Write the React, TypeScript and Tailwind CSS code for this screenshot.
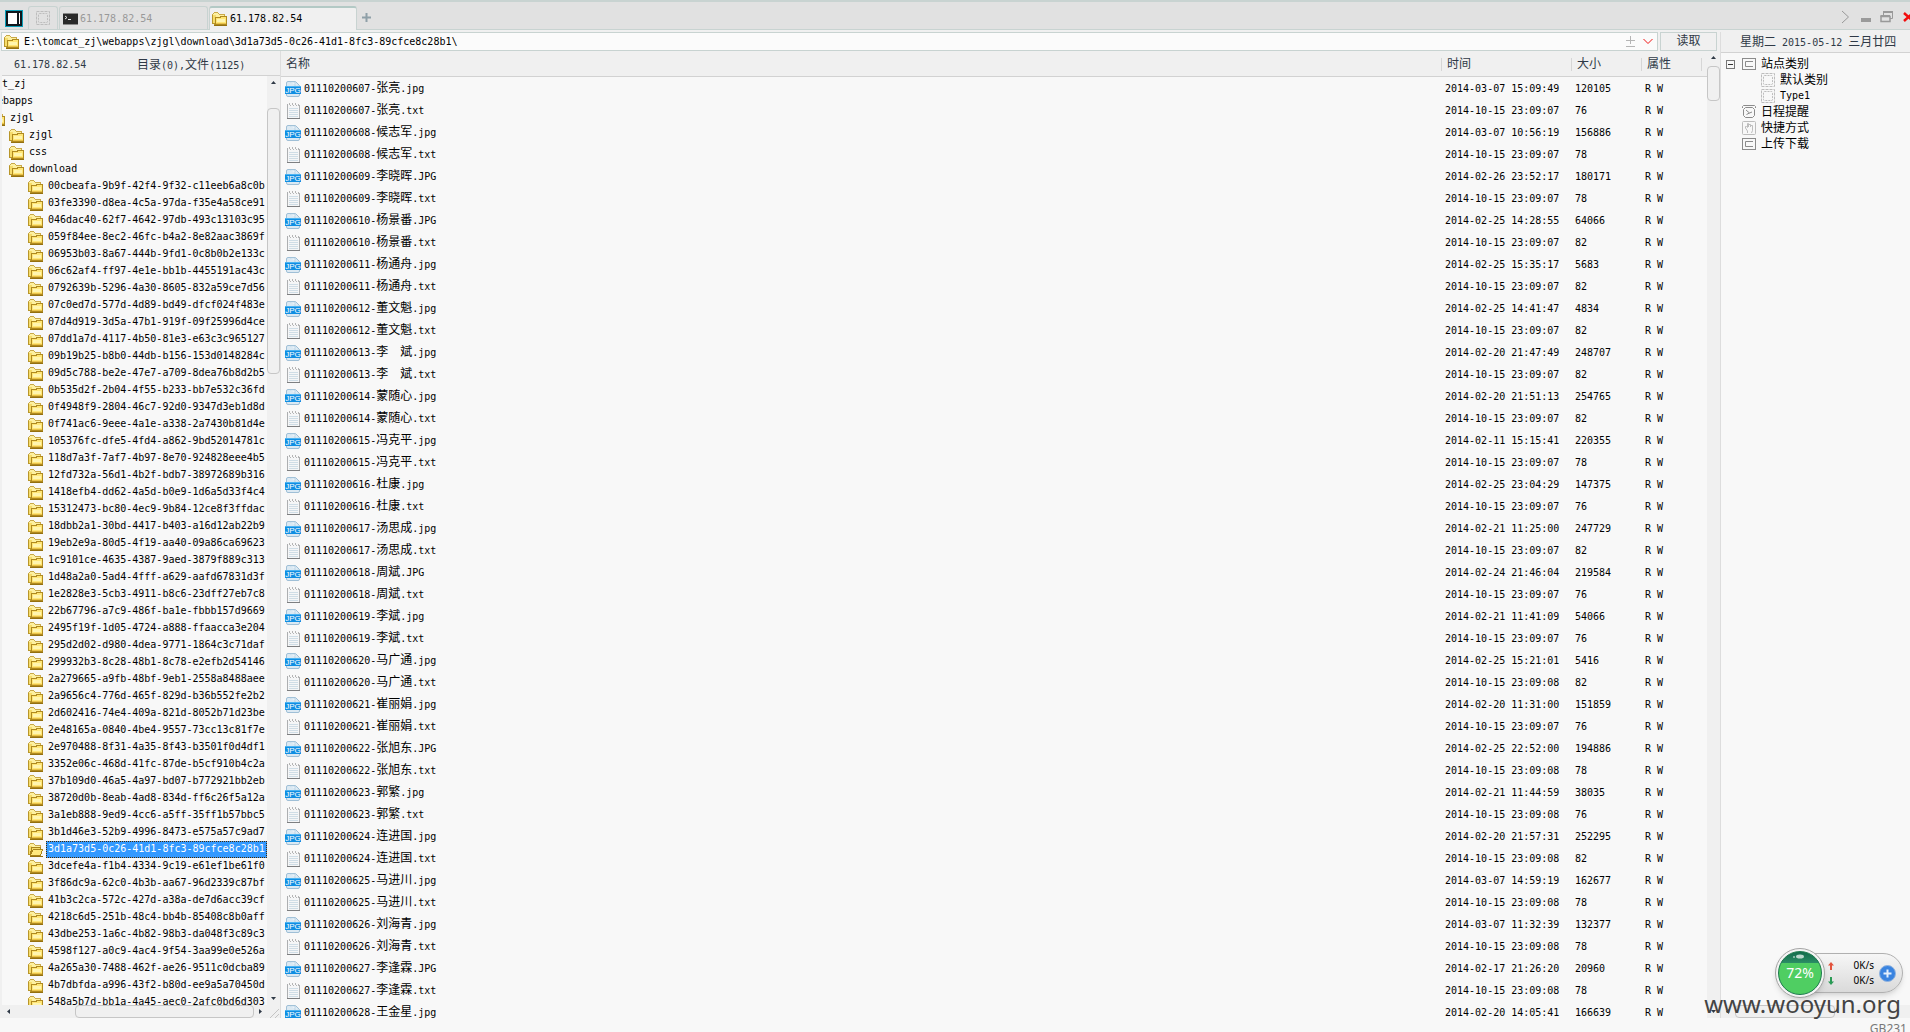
import type { ReactNode } from 'react';

interface TreeNode {
  name: string;
  depth: number;
  expandable?: boolean;
  selected?: boolean;
}

const folders = [
  '00cbeafa-9b9f-42f4-9f32-c11eeb6a8c0b',
  '03fe3390-d8ea-4c5a-97da-f35e4a58ce91',
  '046dac40-62f7-4642-97db-493c13103c95',
  '059f84ee-8ec2-46fc-b4a2-8e82aac3869f',
  '06953b03-8a67-444b-9fd1-0c8b0b2e133c',
  '06c62af4-ff97-4e1e-bb1b-4455191ac43c',
  '0792639b-5296-4a30-8605-832a59ce7d56',
  '07c0ed7d-577d-4d89-bd49-dfcf024f483e',
  '07d4d919-3d5a-47b1-919f-09f25996d4ce',
  '07dd1a7d-4117-4b50-81e3-e63c3c965127',
  '09b19b25-b8b0-44db-b156-153d0148284c',
  '09d5c788-be2e-47e7-a709-8dea76b8d2b5',
  '0b535d2f-2b04-4f55-b233-bb7e532c36fd',
  '0f4948f9-2804-46c7-92d0-9347d3eb1d8d',
  '0f741ac6-9eee-4a1e-a338-2a7430b81d4e',
  '105376fc-dfe5-4fd4-a862-9bd52014781c',
  '118d7a3f-7af7-4b97-8e70-924828eee4b5',
  '12fd732a-56d1-4b2f-bdb7-38972689b316',
  '1418efb4-dd62-4a5d-b0e9-1d6a5d33f4c4',
  '15312473-bc80-4ec9-9b84-12ce8f3ffdac',
  '18dbb2a1-30bd-4417-b403-a16d12ab22b9',
  '19eb2e9a-80d5-4f19-aa40-09a86ca69623',
  '1c9101ce-4635-4387-9aed-3879f889c313',
  '1d48a2a0-5ad4-4fff-a629-aafd67831d3f',
  '1e2828e3-5cb3-4911-b8c6-23dff27eb7c8',
  '22b67796-a7c9-486f-ba1e-fbbb157d9669',
  '2495f19f-1d05-4724-a888-ffaacca3e204',
  '295d2d02-d980-4dea-9771-1864c3c71daf',
  '299932b3-8c28-48b1-8c78-e2efb2d54146',
  '2a279665-a9fb-48bf-9eb1-2558a8488aee',
  '2a9656c4-776d-465f-829d-b36b552fe2b2',
  '2d602416-74e4-409a-821d-8052b71d23be',
  '2e48165a-0840-4be4-9557-73cc13c81f7e',
  '2e970488-8f31-4a35-8f43-b3501f0d4df1',
  '3352e06c-468d-41fc-87de-b5cf910b4c2a',
  '37b109d0-46a5-4a97-bd07-b772921bb2eb',
  '38720d0b-8eab-4ad8-834d-ff6c26f5a12a',
  '3a1eb888-9ed9-4cc6-a5ff-35ff1b57bbc5',
  '3b1d46e3-52b9-4996-8473-e575a57c9ad7',
  '3d1a73d5-0c26-41d1-8fc3-89cfce8c28b1',
  '3dcefe4a-f1b4-4334-9c19-e61ef1be61f0',
  '3f86dc9a-62c0-4b3b-aa67-96d2339c87bf',
  '41b3c2ca-572c-427d-a38a-de7d6acc39cf',
  '4218c6d5-251b-48c4-bb4b-85408c8b0aff',
  '43dbe253-1a6c-4b82-98b3-da048f3c89c3',
  '4598f127-a0c9-4ac4-9f54-3aa99e0e526a',
  '4a265a30-7488-462f-ae26-9511c0dcba89',
  '4b7dbfda-a996-43f2-b80d-ee9a5a70450d',
  '548a5b7d-bb1a-4a45-aec0-2afc0bd6d303',
];

const tree: TreeNode[] = [
  { name: 'tomcat_zj', depth: 0, expandable: true },
  { name: 'webapps', depth: 1, expandable: true },
  { name: 'zjgl', depth: 2, expandable: true },
  { name: 'zjgl', depth: 3 },
  { name: 'css', depth: 3 },
  { name: 'download', depth: 3, expandable: true },
  ...folders.map((name) => ({ name, depth: 4, selected: name.startsWith('3d1a73d5') })),
];

const files = [
  ['01110200607-张亮.jpg', '2014-03-07 15:09:49', '120105'],
  ['01110200607-张亮.txt', '2014-10-15 23:09:07', '76'],
  ['01110200608-候志军.jpg', '2014-03-07 10:56:19', '156886'],
  ['01110200608-候志军.txt', '2014-10-15 23:09:07', '78'],
  ['01110200609-李晓晖.JPG', '2014-02-26 23:52:17', '180171'],
  ['01110200609-李晓晖.txt', '2014-10-15 23:09:07', '78'],
  ['01110200610-杨景番.JPG', '2014-02-25 14:28:55', '64066'],
  ['01110200610-杨景番.txt', '2014-10-15 23:09:07', '82'],
  ['01110200611-杨通舟.jpg', '2014-02-25 15:35:17', '5683'],
  ['01110200611-杨通舟.txt', '2014-10-15 23:09:07', '82'],
  ['01110200612-董文魁.jpg', '2014-02-25 14:41:47', '4834'],
  ['01110200612-董文魁.txt', '2014-10-15 23:09:07', '82'],
  ['01110200613-李　斌.jpg', '2014-02-20 21:47:49', '248707'],
  ['01110200613-李　斌.txt', '2014-10-15 23:09:07', '82'],
  ['01110200614-蒙随心.jpg', '2014-02-20 21:51:13', '254765'],
  ['01110200614-蒙随心.txt', '2014-10-15 23:09:07', '82'],
  ['01110200615-冯克平.jpg', '2014-02-11 15:15:41', '220355'],
  ['01110200615-冯克平.txt', '2014-10-15 23:09:07', '78'],
  ['01110200616-杜康.jpg', '2014-02-25 23:04:29', '147375'],
  ['01110200616-杜康.txt', '2014-10-15 23:09:07', '76'],
  ['01110200617-汤思成.jpg', '2014-02-21 11:25:00', '247729'],
  ['01110200617-汤思成.txt', '2014-10-15 23:09:07', '82'],
  ['01110200618-周斌.JPG', '2014-02-24 21:46:04', '219584'],
  ['01110200618-周斌.txt', '2014-10-15 23:09:07', '76'],
  ['01110200619-李斌.jpg', '2014-02-21 11:41:09', '54066'],
  ['01110200619-李斌.txt', '2014-10-15 23:09:07', '76'],
  ['01110200620-马广通.jpg', '2014-02-25 15:21:01', '5416'],
  ['01110200620-马广通.txt', '2014-10-15 23:09:08', '82'],
  ['01110200621-崔丽娟.jpg', '2014-02-20 11:31:00', '151859'],
  ['01110200621-崔丽娟.txt', '2014-10-15 23:09:07', '76'],
  ['01110200622-张旭东.JPG', '2014-02-25 22:52:00', '194886'],
  ['01110200622-张旭东.txt', '2014-10-15 23:09:08', '78'],
  ['01110200623-郭繁.jpg', '2014-02-21 11:44:59', '38035'],
  ['01110200623-郭繁.txt', '2014-10-15 23:09:08', '76'],
  ['01110200624-连进国.jpg', '2014-02-20 21:57:31', '252295'],
  ['01110200624-连进国.txt', '2014-10-15 23:09:08', '82'],
  ['01110200625-马进川.jpg', '2014-03-07 14:59:19', '162677'],
  ['01110200625-马进川.txt', '2014-10-15 23:09:08', '78'],
  ['01110200626-刘海青.jpg', '2014-03-07 11:32:39', '132377'],
  ['01110200626-刘海青.txt', '2014-10-15 23:09:08', '78'],
  ['01110200627-李逢霖.JPG', '2014-02-17 21:26:20', '20960'],
  ['01110200627-李逢霖.txt', '2014-10-15 23:09:08', '78'],
  ['01110200628-王金星.jpg', '2014-02-20 14:05:41', '166639'],
];

// Latin is set at 10px mono (6px a character), Chinese at 12px, so both share one grid
function Mixed({ children }: { children: string }) {
  return (
    <span className="whitespace-pre">
      {children.split(/([\u3000\u4e00-\u9fff]+)/).map((part, i) =>
        i % 2 ? (
          <span key={i} className="text-[12px]">
            {part}
          </span>
        ) : (
          part
        ),
      )}
    </span>
  );
}

function FolderIcon({ open = false }: { open?: boolean }) {
  return (
    <svg width="16" height="16" viewBox="0 0 16 16" className="shrink-0" shapeRendering="crispEdges">
      <path d="M2 1h4v1h1v1h6v3H0V3h1V2h1z" fill="#c9a94a" />
      <path d="M2 2h4v1h1v1h5v2H1V3h1z" fill="#fdf0a0" />
      <path d="M0 4h4v10H2v-1H0z" fill="#b8962a" />
      <path d="M1 4h3v8H1z" fill="#f6dc6c" />
      {open ? (
        <>
          <path d="M3 5h10v9H2z" fill="#a8841c" />
          <path d="M4 6h8v3H4z" fill="#f5dc68" />
          <path d="M5 7h10v2h-1v3h-1v2H2v-2h1v-2h1V8h1z" fill="#a8841c" />
          <path d="M5 8h9v1h-1v3h-1v1H3v-1h1v-2h1z" fill="#ffe97e" />
        </>
      ) : (
        <>
          <path d="M3 6h5V5h7v9H3z" fill="#b08a20" />
          <path d="M4 7h5V6h5v7H4z" fill="#ffe676" />
          <path d="M5 8h8v3H5z" fill="#fff5b0" />
          <path d="M4 12h10v1H4z" fill="#e9c24a" />
        </>
      )}
      <path d="M2 14h13v1H2z" fill="#94700f" />
    </svg>
  );
}

function JpgIcon() {
  return (
    <svg width="16" height="16" viewBox="0 0 16 16" className="shrink-0">
      <path d="M1.5 2q0-1.500 1.500-1.500h7.500l4 4V14q0 1.500-1.500 1.500H3q-1.500 0-1.500-1.500z" fill="#dbe9f3" stroke="#9fbfd6" />
      <path d="M5 1h5v4h4" fill="#f4f9fc" stroke="#a9c9de" strokeWidth=".7" />
      <path d="M0 5h16v8H0z" fill="#108ee2" />
      <path d="M0 5h16v1H0z" fill="#4db4f2" />
      <text x="8" y="12" fontSize="8" textAnchor="middle" fill="#fff" fontFamily="Liberation Sans, sans-serif">
        JPG
      </text>
    </svg>
  );
}

function TxtIcon() {
  return (
    <svg width="16" height="16" viewBox="0 0 16 16" className="shrink-0" shapeRendering="crispEdges">
      <path d="M2 2h12v13H2z" fill="#f5f6f7" />
      <path d="M2 1h1v14H2zM14 2h1v13h-1z" fill="#adafb1" />
      <path d="M4 0h1v2H4zM7 0h1v2H7zM10 0h1v2h-1zM13 1h1v2h-1zM5 2h1v1H5zM8 2h1v1H8zM11 2h1v1h-1z" fill="#b5b5b5" />
      <path d="M4 5h9v1H4zM4 7h9v1H4zM4 9h9v1H4zM4 11h9v1H4zM4 13h9v1H4z" fill="#cfdde6" />
      <path d="M2 15h13v1H2z" fill="#7d7f81" />
    </svg>
  );
}

function DashedIcon() {
  return (
    <svg width="14" height="14" viewBox="0 0 14 14" fill="none" className="shrink-0 text-[#bdbdbd]">
      <rect x=".5" y=".5" width="13" height="13" stroke="currentColor" strokeDasharray="3 1" />
      <rect x="2.500" y="2.500" width="9" height="9" rx="1" stroke="currentColor" strokeDasharray="2 1" />
    </svg>
  );
}

function BoxIcon() {
  return (
    <svg width="14" height="14" viewBox="0 0 14 14" fill="none" stroke="#8b8b8b" className="shrink-0">
      <rect x=".5" y="1.500" width="13" height="11" />
      <path d="M11 4.500H3.500v5H11" />
    </svg>
  );
}

function ClockIcon() {
  return (
    <svg width="14" height="14" viewBox="0 0 14 14" fill="none" stroke="#8b8b8b" className="shrink-0">
      <path d="M.5 3V1.500l1-1h11l1 1V3" />
      <path d="M3.500 2.500h7l2 2v6l-2 2h-7l-2-2v-6z" />
      <path d="M4 5l3.500 3L10 7M7.500 8 4.500 9.500" />
    </svg>
  );
}

function HandIcon() {
  return (
    <svg width="14" height="14" viewBox="0 0 14 14" fill="none" stroke="#bdbdbd" className="shrink-0">
      <rect x=".5" y=".5" width="13" height="13" rx="1" />
      <path d="M5.500 12v-2l-2-3V5.500h1l1 1V2.500h1V6 3.500h2V6 4.500h2v5l-1 2.500" />
    </svg>
  );
}

type Direction = 'up' | 'down' | 'left' | 'right';

const arrows: Record<Direction, string> = {
  up: 'M0 4 2.500 1 5 4z',
  down: 'M0 1 2.500 4 5 1z',
  left: 'M4 0 1 2.500 4 5z',
  right: 'M1 0 4 2.500 1 5z',
};

function ScrollArrow({ dir }: { dir: Direction }) {
  return (
    <button aria-label={dir} className="flex h-[13px] w-[13px] shrink-0 items-center justify-center">
      <svg width="5" height="5" viewBox="0 0 5 5" fill="#2f3946">
        <path d={arrows[dir]} />
      </svg>
    </button>
  );
}

function SiteItem({ icon, child = false, children }: { icon: ReactNode; child?: boolean; children: string }) {
  return (
    <li className={`flex h-4 items-center gap-[5px] ${child ? 'pl-10' : 'pl-[21px]'}`}>
      {icon}
      <Mixed>{children}</Mixed>
    </li>
  );
}

function TabBar() {
  return (
    <header className="flex h-[30px] items-stretch border-t-2 border-b border-[#c8d3d1] bg-[#e1e1e1] pt-1 pl-[5px]">
      <svg width="18" height="17" viewBox="0 0 18 17" className="mt-1 shrink-0">
        <rect width="18" height="17" fill="#0c9fb8" />
        <rect x="1" y="1" width="16" height="15" fill="#10171c" />
        <path d="M3 3h9v11H3zM14 3h1v11h-1z" fill="#fff" />
      </svg>
      <button aria-label="首页" className="ml-[5px] flex w-[30px] items-center justify-center rounded-t-[3px] border border-b-0 border-[#c8d3d1]">
        <DashedIcon />
      </button>
      <button className="ml-px flex w-[149px] items-center gap-[2px] rounded-t-[3px] border border-b-0 border-[#c8d3d1] pt-px pl-[3px] text-[#999]">
        <svg width="15" height="12" viewBox="0 0 15 12" className="shrink-0">
          <rect width="15" height="12" fill="#8a8a8a" />
          <rect y="1" width="15" height="10" fill="#2a2a2a" />
          <path d="M2 3l2 1.500L2 6M5 6.500h3" stroke="#e6e6e6" fill="none" />
        </svg>
        61.178.82.54
      </button>
      <button className="-mb-px ml-px flex w-[148px] items-center gap-[2px] rounded-t-[3px] border border-t-2 border-b-0 border-[#c8d3d1] border-t-[#b3c9c5] bg-[#f0f0f0] pl-[2px] text-black">
        <FolderIcon />
        61.178.82.54
      </button>
      <button aria-label="新标签" className="ml-[5px]">
        <svg width="9" height="9" viewBox="0 0 9 9" stroke="#8fa0a8" strokeWidth="2">
          <path d="M4.500 0v9M0 4.500h9" />
        </svg>
      </button>
      <div className="-mr-1 ml-auto flex items-center gap-[9px] pb-px">
        <button aria-label="更多">
          <svg width="9" height="14" viewBox="0 0 9 14" fill="none" stroke="#999">
            <path d="M1 1l6.500 6L1 13" />
          </svg>
        </button>
        <button aria-label="最小化">
          <svg width="12" height="14" viewBox="0 0 12 14" fill="#9a9a9a">
            <path d="M2 8h10v4H2z" />
          </svg>
        </button>
        <button aria-label="还原">
          <svg width="14" height="14" viewBox="0 0 14 14" fill="none" stroke="#999">
            <path d="M3.500 5V1.500h9v7H10" />
            <path d="M3 2h10" strokeWidth="2" />
            <path d="M1 6.500h9v5H1z" fill="#e1e1e1" strokeWidth="1.500" />
            <path d="M.5 6h9.500" strokeWidth="2" />
          </svg>
        </button>
        <button aria-label="关闭">
          <svg width="11" height="10" viewBox="0 0 11 10" stroke="#f20d0d" strokeWidth="2.500">
            <path d="M1 1l9 8M10 1 1 9" />
          </svg>
        </button>
      </div>
    </header>
  );
}

function AddressBar() {
  return (
    <form className="flex h-[19px] shrink-0 gap-[2px] pr-[3px] pl-px">
      <label className="flex flex-1 items-center gap-1 border border-[#c8d3d1] bg-[#fbfbfb] pr-1 pl-[2px]">
        <FolderIcon />
        <input
          aria-label="路径"
          className="h-[17px] flex-1 bg-transparent leading-[17px] text-black outline-none"
          defaultValue="E:\tomcat_zj\webapps\zjgl\download\3d1a73d5-0c26-41d1-8fc3-89cfce8c28b1\"
        />
        <svg width="9" height="11" viewBox="0 0 9 11" stroke="#b5b5b5">
          <path d="M4.500 0v8M0 4.500h9M0 10.500h9" />
        </svg>
        <svg width="10" height="7" viewBox="0 0 10 7" fill="none" stroke="#f01515" className="ml-1">
          <path d="M.5 1 5 5.500 9.500 1" />
        </svg>
      </label>
      <button type="button" className="w-[57px] border border-[#c8d3d1] text-[12px] leading-[17px] text-[#2f3946]">
        读取
      </button>
    </form>
  );
}

function FolderPane() {
  return (
    <section className="flex w-[281px] shrink-0 flex-col border-r border-[#ddd] pl-[2px]">
      <div className="flex h-[25px] shrink-0 items-center border-b border-[#d2d2d2] pt-1 pl-3 text-[#2f3946]">
        <span className="w-[123px]">61.178.82.54</span>
        <Mixed>目录(0),文件(1125)</Mixed>
      </div>
      <div className="flex min-h-0 flex-1">
        <ul className="min-w-0 flex-1 overflow-hidden bg-[#f8f8f8]">
          {tree.map((node) => (
            <li
              key={`${node.depth}${node.name}`}
              className="-ml-[66px] flex h-[17px] w-max items-center"
              style={{ paddingLeft: node.depth * 19 }}
            >
              <span
                className={`mr-[7px] box-border h-[9px] w-[9px] shrink-0 ${node.expandable ? 'border border-[#555]' : ''}`}
              />
              <FolderIcon open={node.selected} />
              <span
                className={`ml-[2px] h-[17px] pr-[2px] pl-[2px] leading-4 ${
                  node.selected
                    ? 'bg-[#3399ff] text-white outline-1 -outline-offset-1 outline-dotted outline-[#4a2a00]'
                    : ''
                }`}
              >
                {node.name}
              </span>
            </li>
          ))}
        </ul>
        <div className="flex w-[13px] flex-col">
          <ScrollArrow dir="up" />
          <div className="mt-[19px] h-[266px] rounded-[4px] border border-[#c6c6c6]" />
          <div className="mt-auto">
            <ScrollArrow dir="down" />
          </div>
        </div>
      </div>
      <div className="flex h-[13px] shrink-0">
        <ScrollArrow dir="left" />
        <div className="ml-[60px] w-[179px] rounded-[4px] border border-[#c6c6c6]" />
        <ScrollArrow dir="right" />
        <svg width="9" height="9" viewBox="0 0 9 9" stroke="#c4c4c4" className="mt-1 ml-[3px]">
          <path d="M0 9 9 0M5 9l4-4" />
        </svg>
      </div>
    </section>
  );
}

function FilePane() {
  return (
    <section className="flex min-w-0 flex-1">
      <div className="min-w-0 flex-1 overflow-hidden bg-[#f8f8f8]">
        <table className="w-full table-fixed border-collapse">
          <colgroup>
            <col />
            <col className="w-[130px]" />
            <col className="w-[70px]" />
            <col className="w-[60px]" />
            <col className="w-[6px]" />
          </colgroup>
          <thead className="bg-[#f0f0f0] text-left text-[12px] text-[#2f3946]">
            <tr className="h-[25px] border-b border-[#d2d2d2]">
              <th className="p-0 pt-[2px] pl-[5px] font-normal">名称</th>
              {['时间', '大小', '属性', ''].map((title) => (
                <th key={title} className="p-0 pt-[2px] font-normal">
                  <div className="h-[13px] border-l border-[#d6d6d6] pl-[5px] leading-[13px]">{title}</div>
                </th>
              ))}
            </tr>
          </thead>
          <tbody>
            {files.map(([name, time, size]) => (
              <tr key={name} className="h-[22px]">
                <td className="p-0 pt-[3px]">
                  <div className="flex h-[18px] items-center gap-[3px] pl-1">
                    {name.endsWith('.txt') ? <TxtIcon /> : <JpgIcon />}
                    <Mixed>{name}</Mixed>
                  </div>
                </td>
                <td className="p-0 pt-[3px] pl-1">{time}</td>
                <td className="p-0 pt-[3px] pl-1">{size}</td>
                <td className="p-0 pt-[3px] pl-1">R W</td>
                <td className="p-0" />
              </tr>
            ))}
          </tbody>
        </table>
      </div>
      <div className="flex w-[13px] flex-col">
        <ScrollArrow dir="up" />
        <div className="mt-[2px] h-[35px] rounded-[4px] border border-[#c6c6c6]" />
        <div className="mt-auto">
          <ScrollArrow dir="down" />
        </div>
      </div>
    </section>
  );
}

function SitePane() {
  return (
    <aside className="flex w-[190px] shrink-0 flex-col border-l border-[#ddd]">
      <div className="flex h-[21px] shrink-0 items-center border-b border-[#d2d2d2] pl-[19px] text-[#2f3946]">
        <Mixed>星期二 2015-05-12 三月廿四</Mixed>
      </div>
      <ul className="relative flex-1 bg-[#f8f8f8] pt-[3px]">
        <svg width="9" height="9" viewBox="0 0 9 9" fill="none" stroke="#333" className="absolute top-[7px] left-[5px]">
          <rect x=".5" y=".5" width="8" height="8" stroke="#777" />
          <path d="M2 4.500h5" />
        </svg>
        <SiteItem icon={<BoxIcon />}>站点类别</SiteItem>
        <SiteItem icon={<DashedIcon />} child>
          默认类别
        </SiteItem>
        <SiteItem icon={<DashedIcon />} child>
          Type1
        </SiteItem>
        <SiteItem icon={<ClockIcon />}>日程提醒</SiteItem>
        <SiteItem icon={<HandIcon />}>快捷方式</SiteItem>
        <SiteItem icon={<BoxIcon />}>上传下载</SiteItem>
      </ul>
      <div className="flex h-[13px] shrink-0">
        <ScrollArrow dir="left" />
        <div className="ml-px w-[100px] rounded-[4px] border border-[#c6c6c6]" />
      </div>
    </aside>
  );
}

function SpeedWidget() {
  return (
    <div className="absolute right-[7px] bottom-[34px] flex h-[50px] w-[128px] items-center font-['Noto_Sans',sans-serif]">
      <div className="ml-6 flex h-10 flex-1 items-center rounded-r-full border border-[#b0b0b0] bg-linear-to-b from-[#f6f6f6] to-[#dadada] pr-[6px] pl-[28px] shadow-md">
        <div className="flex flex-col gap-[7px]">
          <svg width="6" height="8" viewBox="0 0 6 8" fill="#e2533c">
            <path d="M3 0 6 3.500H4V8H2V3.500H0z" />
          </svg>
          <svg width="6" height="8" viewBox="0 0 6 8" fill="#2a9a55">
            <path d="M3 8 0 4.500h2V0h2v4.500h2z" />
          </svg>
        </div>
        <div className="flex-1 pr-[5px] text-right text-[10px] leading-[15px] text-black">
          <div>0K/s</div>
          <div>0K/s</div>
        </div>
        <svg width="17" height="17" viewBox="0 0 17 17">
          <circle cx="8.500" cy="8.500" r="8" fill="#3a84e0" stroke="#8fb2de" />
          <path d="M8.500 4.500v8M4.500 8.500h8" stroke="#e4f0fd" strokeWidth="2" />
        </svg>
      </div>
      <div className="absolute left-0 flex h-[50px] w-[50px] items-center justify-center rounded-full border border-[#a5a5a5] bg-[#f4f4f4] shadow-md">
        <div className="flex h-11 w-11 items-center justify-center rounded-full border border-[#1b7a4c] bg-linear-to-b from-[#126b4c] from-0% via-[#2c8f66] via-27% to-[#4fce62] to-27% text-[14px] text-white">
          72%
        </div>
        <svg width="14" height="5" viewBox="0 0 14 5" fill="#fff" className="absolute top-[5px] left-[16px]">
          <circle cx="2" cy="3" r="1" opacity=".6" />
          <ellipse cx="8" cy="2.500" rx="4" ry="2" opacity=".7" />
        </svg>
      </div>
    </div>
  );
}

export default function App() {
  return (
    <div className="relative flex h-screen flex-col overflow-hidden bg-[#f0f0f0] font-['DejaVu_Sans_Mono','Noto_Sans_CJK_SC',monospace] text-[10px] leading-[18px] text-black">
      <TabBar />
      <div className="flex min-h-0 flex-1 pt-[2px]">
        <main className="flex min-w-0 flex-1 flex-col">
          <AddressBar />
          <div className="flex min-h-0 flex-1">
            <FolderPane />
            <FilePane />
          </div>
        </main>
        <SitePane />
      </div>
      <footer className="flex h-[14px] shrink-0 justify-end bg-[#f8f8f8] pr-[3px] font-['Noto_Sans',sans-serif] text-[12px] text-[#777]">
        <span className="pt-[2px]">GB231</span>
      </footer>
      <div className="absolute right-[9px] bottom-3 font-['Noto_Sans',sans-serif] text-[24px] leading-8 text-[#444]">
        www.wooyun.org
      </div>
      <SpeedWidget />
    </div>
  );
}
